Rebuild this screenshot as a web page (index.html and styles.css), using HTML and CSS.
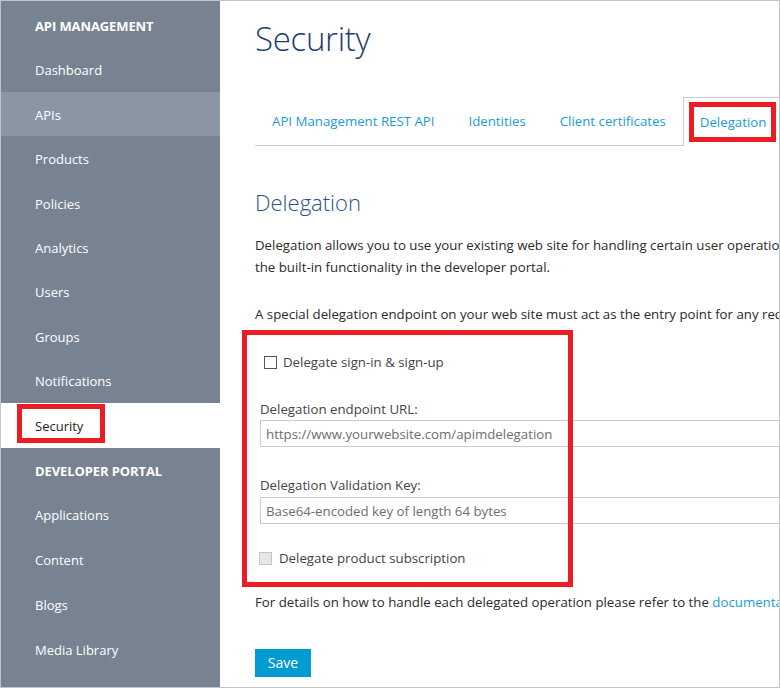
FILE: index.html
```html
<!DOCTYPE html>
<html lang="en">
<head>
<meta charset="utf-8">
<title>Security - API Management</title>
<link rel="stylesheet" href="styles.css">
</head>
<body>
<div class="frame">
  <nav class="sidebar">
    <div class="nav-head">API MANAGEMENT</div>
    <div class="nav-item">Dashboard</div>
    <div class="nav-item hover">APIs</div>
    <div class="nav-item">Products</div>
    <div class="nav-item">Policies</div>
    <div class="nav-item">Analytics</div>
    <div class="nav-item">Users</div>
    <div class="nav-item">Groups</div>
    <div class="nav-item">Notifications</div>
    <div class="nav-item active">Security<span class="callout nav-callout"></span></div>
    <div class="nav-head lower">DEVELOPER PORTAL</div>
    <div class="nav-item lower">Applications</div>
    <div class="nav-item lower">Content</div>
    <div class="nav-item lower">Blogs</div>
    <div class="nav-item lower">Media Library</div>
  </nav>
  <main class="main">
    <h1 class="title">Security</h1>
    <div class="tabs">
      <div class="tab">API Management REST API</div>
      <div class="tab">Identities</div>
      <div class="tab">Client certificates</div>
      <div class="tab active">Delegation<span class="callout tab-callout"></span></div>
    </div>
    <h2 class="heading">Delegation</h2>
    <p class="para first">Delegation allows you to use your existing web site for handling certain user operations instead of using<br>the built-in functionality in the developer portal.</p>
    <p class="para second">A special delegation endpoint on your web site must act as the entry point for any request delegated from the developer portal.</p>
    <div class="form">
      <label class="check check-one"><input type="checkbox" class="cb"><span>Delegate sign-in &amp; sign-up</span></label>
      <div class="field-label label-one">Delegation endpoint URL:</div>
      <input class="text-input" type="text" placeholder="https://www.yourwebsite.com/apimdelegation">
      <div class="field-label label-two">Delegation Validation Key:</div>
      <input class="text-input input-two" type="text" placeholder="Base64-encoded key of length 64 bytes">
      <label class="check check-two"><input type="checkbox" class="cb" disabled><span>Delegate product subscription</span></label>
      <span class="callout form-callout"></span>
    </div>
    <p class="para footer">For details on how to handle each delegated operation please refer to the <a class="link" href="#">documentation</a>.</p>
    <button class="save" type="button">Save</button>
  </main>
</div>
</body>
</html>
```

FILE: styles.css
```css
html, body {
  margin: 0;
  padding: 0;
  background: #ffffff;
}

.frame {
  width: 780px;
  height: 688px;
  box-sizing: border-box;
  border: 1px solid #c4c4c4;
  display: flex;
  overflow: hidden;
  font-family: "Open Sans", "Noto Sans", sans-serif;
  font-size: 13px;
}

.sidebar {
  width: 219px;
  flex: 0 0 219px;
  background: #778391;
  color: #ffffff;
  padding-top: 2px;
  box-sizing: border-box;
}

.nav-head,
.nav-item {
  position: relative;
  height: 44.4px;
  line-height: 42.4px;
  padding: 2px 0 0 34px;
  box-sizing: border-box;
  white-space: nowrap;
}

.nav-head.lower,
.nav-item.lower {
  height: 44.8px;
  line-height: 42.8px;
}

.nav-head {
  font-weight: 700;
  letter-spacing: -0.1px;
}

.nav-item.hover {
  background: #8a96a4;
}

.nav-item.active {
  background: #ffffff;
  color: #222222;
  height: 45px;
}

.callout {
  position: absolute;
  box-sizing: border-box;
  border: 5px solid #ec1c24;
  pointer-events: none;
}

.nav-callout {
  left: 16px;
  top: 1.6px;
  width: 88px;
  height: 39px;
}

.main {
  flex: 1;
  min-width: 0;
  overflow: hidden;
  padding: 16px 0 0 35px;
  color: #2a2a2a;
  font-size: 13.25px;
}

.title {
  margin: 0;
  font-size: 33px;
  line-height: 44px;
  font-weight: 300;
  letter-spacing: -0.3px;
  color: #1e3d6d;
}

.tabs {
  margin-top: 36px;
  display: flex;
  align-items: flex-start;
  border-bottom: 1px solid #cccccc;
  height: 48px;
  width: 700px;
}

.tab {
  position: relative;
  height: 48px;
  line-height: 48px;
  padding: 0 17px;
  color: #1b9bd6;
  white-space: nowrap;
}

.tab.active {
  height: 49px;
  line-height: 48px;
  margin-bottom: -1px;
  padding: 0 17px 0 16px;
  border: 1px solid #cccccc;
  border-bottom: none;
  background: #ffffff;
  box-sizing: border-box;
  width: 120px;
}

.tab-callout {
  left: 5px;
  top: 4px;
  width: 87px;
  height: 40px;
}

.heading {
  margin: 41px 0 0;
  font-size: 22px;
  line-height: 30px;
  font-weight: 300;
  color: #2a5286;
}

.para {
  margin: 0;
  line-height: 22px;
  white-space: nowrap;
}

.para.first {
  margin-top: 16.5px;
}

.para.second {
  margin-top: 25px;
}

.form {
  position: relative;
  margin-top: 5.5px;
  padding-bottom: 18px;
  display: flex;
  flex-direction: column;
  align-items: flex-start;
}

.check {
  display: flex;
  align-items: center;
  height: 22px;
  line-height: 22px;
  color: #444444;
  white-space: nowrap;
}

.check-one {
  margin-top: 21px;
  margin-left: 9px;
}

.check-two {
  margin-top: 23px;
  margin-left: 4px;
}

.check-two span {
  margin-left: 1px;
}

.cb {
  appearance: none;
  -webkit-appearance: none;
  width: 13px;
  height: 13px;
  margin: 0 6px 0 0;
  box-sizing: border-box;
  border: 1px solid #555555;
  background: #ffffff;
  border-radius: 0;
}

.cb:disabled {
  border-color: #c6c6c6;
  background: #e6e6e6;
}

.field-label {
  line-height: 22px;
  height: 22px;
  margin-left: 5px;
  color: #444444;
  white-space: nowrap;
}

.label-one {
  margin-top: 25px;
}

.label-two {
  margin-top: 27px;
}

.text-input {
  display: block;
  width: 600px;
  height: 27px;
  margin: 0 0 0 5px;
  box-sizing: border-box;
  border: 1px solid #cccccc;
  padding: 0 5px;
  font-family: "Open Sans", "Noto Sans", sans-serif;
  font-size: 13.25px;
  color: #555555;
  background: #ffffff;
  outline: none;
}

.text-input::placeholder {
  color: #6e6e6e;
  opacity: 1;
}

.input-two {
  margin-top: 1px;
}

.form-callout {
  left: -13px;
  top: 0;
  width: 331px;
  height: 257px;
}

.para.footer {
  margin-top: 4px;
}

.link {
  color: #1b9bd6;
  text-decoration: none;
}

.save {
  display: block;
  margin-top: 36px;
  width: 56px;
  height: 28px;
  padding: 0;
  border: none;
  background: #009bd1;
  color: #ffffff;
  font-family: "Open Sans", "Noto Sans", sans-serif;
  font-size: 14px;
  line-height: 28px;
}
```
